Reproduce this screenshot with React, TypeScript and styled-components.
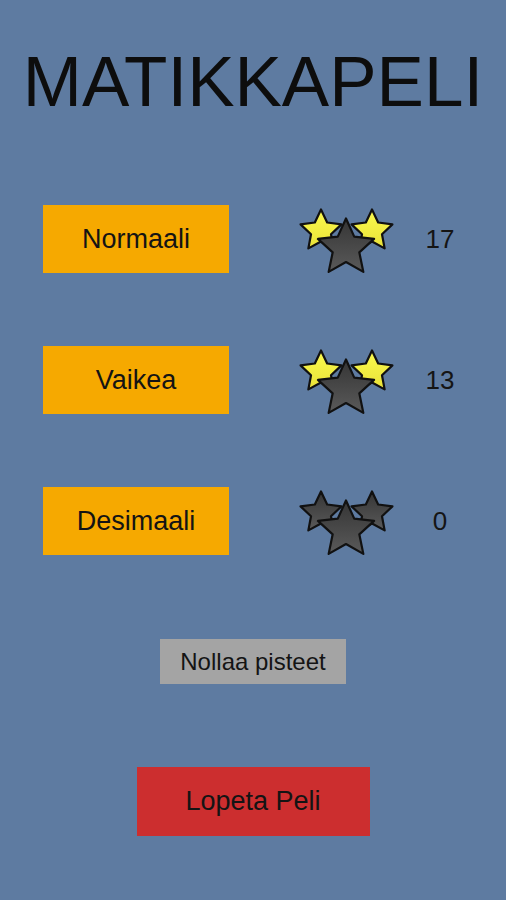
import React from 'react';
import styled, { createGlobalStyle } from 'styled-components';

const GlobalStyle = createGlobalStyle`
  html, body {
    margin: 0;
    padding: 0;
    background: #5e7ba1;
  }
  body {
    font-family: 'Liberation Sans', Arial, sans-serif;
    color: #111;
  }
`;

const Screen = styled.main`
  width: 506px;
  height: 900px;
  box-sizing: border-box;
  background: #5e7ba1;
  display: flex;
  flex-direction: column;
  align-items: center;
  overflow: hidden;
`;

const Title = styled.h1`
  margin: 41px 0 0 0;
  font-size: 71px;
  font-weight: 400;
  line-height: 82px;
  color: #0d0d0d;
`;

const Levels = styled.section`
  margin-top: 82px;
  width: 100%;
  display: flex;
  flex-direction: column;
  gap: 73px;
`;

const LevelRow = styled.div`
  display: flex;
  align-items: center;
  padding-left: 43px;
  height: 68px;
`;

const StarBox = styled.div`
  margin-left: 69px;
  width: 100px;
  height: 70px;
  display: flex;
`;

const Button = styled.button<{ $bg: string; $w: number; $h: number; $size: number }>`
  width: ${p => p.$w}px;
  height: ${p => p.$h}px;
  border: 0;
  border-radius: 0;
  padding: 0;
  background: ${p => p.$bg};
  font-family: 'Liberation Sans', Arial, sans-serif;
  font-size: ${p => p.$size}px;
  color: #141414;
  cursor: pointer;
  flex-shrink: 0;
`;

const Score = styled.span`
  font-size: 26px;
  color: #151515;
  width: 40px;
  text-align: center;
  margin-left: 22px;
`;

const Reset = styled.div`
  margin-top: 84px;
`;

const Quit = styled.div`
  margin-top: 83px;
`;

const starPoints = (cx: number, cy: number, R: number, r: number) => {
  const pts: string[] = [];
  for (let i = 0; i < 10; i++) {
    const rad = i % 2 === 0 ? R : r;
    const a = (Math.PI / 5) * i - Math.PI / 2;
    pts.push(`${(cx + rad * Math.cos(a)).toFixed(2)},${(cy + rad * Math.sin(a)).toFixed(2)}`);
  }
  return pts.join(' ');
};

const Stars: React.FC<{ earned: boolean; id: string }> = ({ earned, id }) => (
  <svg width="100" height="70" viewBox="0 0 100 70">
    <defs>
      <linearGradient id={`y-${id}`} x1="0" y1="0" x2="0" y2="1">
        <stop offset="0" stopColor="#fbfa4e" />
        <stop offset="1" stopColor="#e9e238" />
      </linearGradient>
      <linearGradient id={`d-${id}`} x1="0" y1="0" x2="0" y2="1">
        <stop offset="0" stopColor="#353535" />
        <stop offset="1" stopColor="#5a5a5a" />
      </linearGradient>
    </defs>
    <polygon
      points={starPoints(23, 27, 21.5, 10.5)}
      fill={earned ? `url(#y-${id})` : `url(#d-${id})`}
      stroke="#111"
      strokeWidth="2.2"
      strokeLinejoin="round"
    />
    <polygon
      points={starPoints(74, 27, 21.5, 10.5)}
      fill={earned ? `url(#y-${id})` : `url(#d-${id})`}
      stroke="#111"
      strokeWidth="2.2"
      strokeLinejoin="round"
    />
    <polygon
      points={starPoints(48, 44, 29.5, 14)}
      fill={`url(#d-${id})`}
      stroke="#111"
      strokeWidth="2.2"
      strokeLinejoin="round"
    />
  </svg>
);

const levels = [
  { name: 'Normaali', earned: true, score: 17 },
  { name: 'Vaikea', earned: true, score: 13 },
  { name: 'Desimaali', earned: false, score: 0 },
];

const App: React.FC = () => {
  return (
    <Screen>
      <GlobalStyle />
      <Title>MATIKKAPELI</Title>
      <Levels>
        {levels.map(l => (
          <LevelRow key={l.name}>
            <Button $bg="#f6a900" $w={186} $h={68} $size={27}>{l.name}</Button>
            <StarBox>
              <Stars earned={l.earned} id={l.name} />
            </StarBox>
            <Score>{l.score}</Score>
          </LevelRow>
        ))}
      </Levels>
      <Reset>
        <Button $bg="#a4a4a4" $w={186} $h={45} $size={24}>Nollaa pisteet</Button>
      </Reset>
      <Quit>
        <Button $bg="#cc2e2f" $w={233} $h={69} $size={27}>Lopeta Peli</Button>
      </Quit>
    </Screen>
  );
};

export default App;
